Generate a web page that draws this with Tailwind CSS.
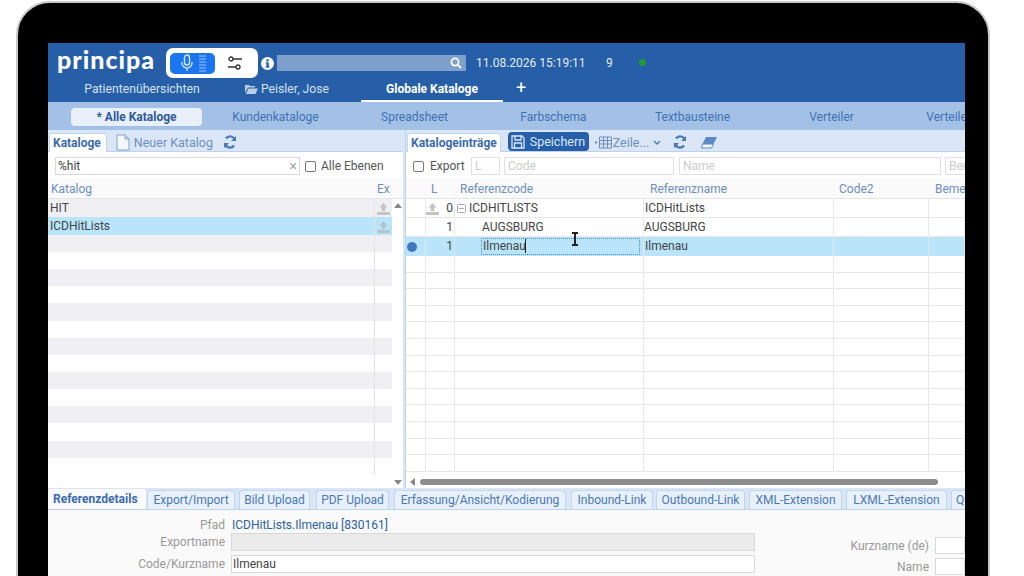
<!DOCTYPE html>
<html lang="en">
<head>
  <meta charset="UTF-8" />
  <title>principa - Globale Kataloge</title>
  <script src="https://cdn.jsdelivr.net/npm/@tailwindcss/browser@4"></script>
</head>
<body class="bg-white h-[576px] overflow-hidden font-['Roboto',sans-serif] text-[12px] text-[#444]">
  <!-- device frame -->
  <div class="relative ml-[16px] mt-[1px] w-[974px] h-[600px] bg-black border-2 border-[#c8c8c8] rounded-t-[34px] pt-[40px] pl-[30px]">
    <div class="w-[917px] h-[540px] bg-white overflow-hidden">

      <!-- header -->
      <div class="bg-[#265fa8] h-[59px] border-b border-[#265fa8]">
        <div class="flex items-center h-[35px] text-white">
          <span class="ml-[9px] w-[109px] font-['Lato',sans-serif] font-black text-[25px] leading-none tracking-[1px] -mt-[3px]">principa</span>
          <div class="flex items-center w-[92px] h-[30px] mt-[5px] bg-white rounded-[7px] pl-[4px]">
            <div class="flex items-center justify-center gap-[5px] w-[45px] h-[21px] bg-[#1a76ee] rounded-[5px]">
              <svg width="14" height="18" viewBox="0 0 14 18" fill="none" stroke="#cfe2fb" stroke-width="1.4"><rect x="4.5" y="1" width="5" height="10" rx="2.5"/><path d="M2 8v1a5 5 0 0 0 10 0V8M7 14v3"/></svg>
              <svg width="7" height="17" viewBox="0 0 7 17" fill="#5c9cf3"><rect y="0" width="7" height="2"/><rect y="3" width="7" height="2"/><rect y="6" width="7" height="2"/><rect y="9" width="7" height="2"/><rect y="12" width="7" height="2"/><rect y="15" width="7" height="2"/></svg>
            </div>
            <svg class="ml-[12px]" width="16" height="16" viewBox="0 0 16 16" fill="none" stroke="#333" stroke-width="1.3"><circle cx="4" cy="4" r="2"/><path d="M6 4h9M1 12h8"/><circle cx="11" cy="12" r="2"/></svg>
          </div>
          <svg class="ml-[3px] mt-[5px]" width="13" height="13" viewBox="0 0 13 13"><circle cx="6.5" cy="6.5" r="6.5" fill="#fff"/><rect x="5.4" y="5.4" width="2.4" height="4.8" fill="#265fa8"/><rect x="4.6" y="9.4" width="4" height="1.2" fill="#265fa8"/><rect x="4.6" y="5.2" width="2" height="1" fill="#265fa8"/><circle cx="6.5" cy="3.3" r="1.2" fill="#265fa8"/></svg>
          <div class="flex items-center justify-end ml-[3px] mt-[5px] w-[189px] h-[16px] bg-[#7d9fcb] pr-[4px]">
            <svg width="12" height="12" viewBox="0 0 12 12" fill="none" stroke="#fff" stroke-width="1.8"><circle cx="5" cy="5" r="3.6"/><path d="M8 8l3 3"/></svg>
          </div>
          <span class="ml-[10px] mt-[4px] w-[130px] text-[12px] text-[#e3ecf7]">11.08.2026 15:19:11</span>
          <span class="mt-[4px] w-[33px] text-[#e3ecf7]">9</span>
          <span class="mt-[3px] w-[7px] h-[7px] rounded-full bg-[#1e9a35]"></span>
        </div>
        <div class="flex h-[24px] items-start">
          <div class="w-[188px] pt-[2px] text-center text-[12.2px] text-[#d3e0f1]">Patientenübersichten</div>
          <div class="w-[125px] pt-[2px] flex items-center gap-[3px] pl-[9px] text-[12.2px] text-[#d3e0f1]">
            <svg width="13" height="10" viewBox="0 0 13 10" fill="#b9cde6"><path d="M0 1h4l1 1h5v1.5H3L0 9zM3.500 4.500H13L10.500 10H0.800z"/></svg>
            Peisler, Jose
          </div>
          <div class="w-[142px] h-[24px] pt-[2px] text-center text-white font-bold border-b-2 border-white">Globale Kataloge</div>
          <div class="ml-[13px] text-white text-[18px] leading-[19px]">+</div>
        </div>
      </div>

      <!-- catalogue nav -->
      <div class="flex items-center h-[28px] pt-[1px] pl-[19px] bg-[#a3c1e6] text-[#3f70b3] whitespace-nowrap overflow-hidden">
        <div class="shrink-0 w-[139px] flex justify-center"><span class="w-[131px] h-[18px] leading-[18px] text-center rounded-[4px] bg-[#e9f0f9] font-bold text-[#2d5a98]">* Alle Kataloge</span></div>
        <div class="shrink-0 w-[139px] text-center">Kundenkataloge</div>
        <div class="shrink-0 w-[139px] text-center">Spreadsheet</div>
        <div class="shrink-0 w-[139px] text-center">Farbschema</div>
        <div class="shrink-0 w-[139px] text-center">Textbausteine</div>
        <div class="shrink-0 w-[139px] text-center">Verteiler</div>
        <div class="shrink-0 w-[139px] text-center">Verteilergruppen</div>
      </div>

      <!-- panels -->
      <div class="flex h-[358px] bg-[#dae6f5]">
        <!-- left panel -->
        <div class="flex flex-col w-[355px] h-full">
          <div class="flex items-end h-[22px] border-b border-[#bcd3ee]">
            <div class="ml-[1px] pl-[3px] pr-[5px] h-[19px] leading-[19px] bg-white rounded-t-[3px] border border-b-0 border-[#c3d6ee] font-bold text-[#3a6cb0] -mb-px">Kataloge</div>
            <svg class="ml-[9px]" width="14" height="17" viewBox="0 0 14 17" fill="#f4f8fd" stroke="#7fa3d2"><path d="M1 1h8l4 4v11H1zM9 1v4h4"/></svg>
            <span class="ml-[4px] h-[19px] leading-[21px] text-[12.5px] text-[#6d8fc0]">Neuer Katalog</span>
            <svg class="ml-[10px] mb-[2px]" width="14" height="14" viewBox="0 0 14 14" fill="none" stroke="#4a79b8" stroke-width="2.200"><path d="M12 5.500A5 5 0 0 0 3 3.500M2 8.500A5 5 0 0 0 11 10.500"/><path d="M13 1v5H8zM1 13V8h5z" fill="#4a79b8" stroke="none"/></svg>
          </div>
          <div class="flex-1 bg-white min-h-0">
            <div class="flex items-center h-[26px] pt-[2px] pl-[7px]">
              <div class="flex items-center justify-between w-[245px] h-[18px] border border-[#d8d8d8] pl-[2px] pr-[2px]"><span class="text-[#444]">%hit</span><span class="text-[#aaa] text-[14px] leading-none">×</span></div>
              <span class="ml-[5px] w-[11px] h-[11px] rounded-[2px] border border-[#777] bg-white"></span>
              <span class="ml-[5px] text-[#555]">Alle Ebenen</span>
            </div>
            <div class="flex items-center h-[21px] pt-[1px] pl-[3px] bg-[#fafafa] border-b border-[#e4e4e4] text-[#6d8fc0]">
              <span class="w-[326px]">Katalog</span><span>Ex</span>
            </div>
            <div class="flex h-[288px]">
              <div class="w-[344px] flex flex-col">
                <div class="flex h-[18px] bg-[#f0f0f4] leading-[18px]"><span class="w-[326px] pl-[2px]">HIT</span><span class="flex-1 border-l border-[#e2e2e2] flex justify-center items-center"><svg width="13" height="13" viewBox="0 0 13 13" fill="#c4c4c4"><path d="M6.500 1l4 4.500H8.300V9H4.700V5.500H2.500zM0 10h13v3H0z"/></svg></span></div>
                <div class="flex h-[18px] bg-[#bae4f9] leading-[18px]"><span class="w-[326px] pl-[2px]">ICDHitLists</span><span class="flex-1 border-l border-[#e2e2e2] flex justify-center items-center"><svg width="13" height="13" viewBox="0 0 13 13" fill="#b4c4cc"><path d="M6.500 1l4 4.500H8.300V9H4.700V5.500H2.500zM0 10h13v3H0z"/></svg></span></div>
                <div class="flex h-[17px] bg-[#f0f0f4]"><span class="w-[326px]"></span><span class="flex-1 border-l border-[#e2e2e2]"></span></div>
                <div class="flex h-[17.15px]"><span class="w-[326px]"></span><span class="flex-1 border-l border-[#e2e2e2]"></span></div>
                <div class="flex h-[17.15px] bg-[#f0f0f4]"><span class="w-[326px]"></span><span class="flex-1 border-l border-[#e2e2e2]"></span></div>
                <div class="flex h-[17.15px]"><span class="w-[326px]"></span><span class="flex-1 border-l border-[#e2e2e2]"></span></div>
                <div class="flex h-[17.15px] bg-[#f0f0f4]"><span class="w-[326px]"></span><span class="flex-1 border-l border-[#e2e2e2]"></span></div>
                <div class="flex h-[17.15px]"><span class="w-[326px]"></span><span class="flex-1 border-l border-[#e2e2e2]"></span></div>
                <div class="flex h-[17.15px] bg-[#f0f0f4]"><span class="w-[326px]"></span><span class="flex-1 border-l border-[#e2e2e2]"></span></div>
                <div class="flex h-[17.15px]"><span class="w-[326px]"></span><span class="flex-1 border-l border-[#e2e2e2]"></span></div>
                <div class="flex h-[17.15px] bg-[#f0f0f4]"><span class="w-[326px]"></span><span class="flex-1 border-l border-[#e2e2e2]"></span></div>
                <div class="flex h-[17.15px]"><span class="w-[326px]"></span><span class="flex-1 border-l border-[#e2e2e2]"></span></div>
                <div class="flex h-[17.15px] bg-[#f0f0f4]"><span class="w-[326px]"></span><span class="flex-1 border-l border-[#e2e2e2]"></span></div>
                <div class="flex h-[17.15px]"><span class="w-[326px]"></span><span class="flex-1 border-l border-[#e2e2e2]"></span></div>
                <div class="flex h-[17.15px] bg-[#f0f0f4]"><span class="w-[326px]"></span><span class="flex-1 border-l border-[#e2e2e2]"></span></div>
                <div class="flex h-[17px]"><span class="w-[326px]"></span><span class="flex-1 border-l border-[#e2e2e2]"></span></div>
              </div>
              <div class="flex-1 flex flex-col justify-between items-center pt-[4px] pb-[2px]">
                <svg width="8" height="5" viewBox="0 0 8 5" fill="#888"><path d="M4 0l4 5H0z"/></svg>
                <svg width="8" height="5" viewBox="0 0 8 5" fill="#888"><path d="M4 5L0 0h8z"/></svg>
              </div>
            </div>
          </div>
        </div>

        <!-- right panel -->
        <div class="flex flex-col w-[560px] ml-[2px] h-full border-l border-[#bcd3ee]">
          <div class="flex items-end h-[22px] border-b border-[#bcd3ee] text-[#6d8fc0] whitespace-nowrap">
            <div class="ml-[1px] px-[3px] h-[19px] leading-[19px] bg-white rounded-t-[3px] border border-b-0 border-[#c3d6ee] font-bold text-[#3a6cb0] -mb-px">Katalogeinträge</div>
            <div class="ml-[7px] flex items-center gap-[5px] w-[81px] h-[19px] pl-[3px] rounded-[4px] bg-[#2760a9] text-[12.5px] leading-[20px] text-[#dbe7f6]">
              <svg width="14" height="14" viewBox="0 0 14 14" fill="none" stroke="#dbe7f6" stroke-width="1.300"><path d="M1 1h10l2 2v10H1z"/><path d="M4 1v4h6V1M3.500 13V8h7v5"/></svg>
              <span class="pt-[1px]">Speichern</span>
            </div>
            <svg class="ml-[6px] mb-[2px]" width="17" height="13" viewBox="0 0 17 13" fill="none" stroke="#6d8fc0"><path d="M4.500 1h12v11h-12zM4.500 4.500h12M4.500 8h12M8.500 1v11M12.500 1v11"/><path d="M0 5l3 1.500L0 8z" fill="#6d8fc0" stroke="none"/></svg>
            <span class="ml-[1px] h-[19px] leading-[21px] text-[12.5px]">Zeile...</span>
            <svg class="ml-[4px] mb-[5px]" width="8" height="6" viewBox="0 0 8 6" fill="none" stroke="#4a79b8" stroke-width="1.300"><path d="M1 1l3 3 3-3"/></svg>
            <svg class="ml-[12px] mb-[2px]" width="14" height="14" viewBox="0 0 14 14" fill="none" stroke="#4a79b8" stroke-width="2.200"><path d="M12 5.500A5 5 0 0 0 3 3.500M2 8.500A5 5 0 0 0 11 10.500"/><path d="M13 1v5H8zM1 13V8h5z" fill="#4a79b8" stroke="none"/></svg>
            <svg class="ml-[14px] mb-[2px]" width="17" height="13" viewBox="0 0 17 13"><path d="M5 1h11l-3.500 7H1.500z" fill="#5d8ac6"/><path d="M1.500 8h11l-2 4H.5z" fill="#f3f7fc" stroke="#5d8ac6"/></svg>
          </div>
          <div class="flex-1 bg-white min-h-0 overflow-hidden">
            <div class="flex items-center h-[26px] pt-[2px] pl-[7px] text-[#555] whitespace-nowrap">
              <span class="shrink-0 w-[11px] h-[11px] rounded-[2px] border border-[#777] bg-white"></span>
              <span class="shrink-0 ml-[6px] w-[41px]">Export</span>
              <span class="shrink-0 w-[29px] h-[18px] leading-[16px] pl-[3px] border border-[#e0e0e0] text-[#ccc]">L</span>
              <span class="shrink-0 ml-[4px] w-[170px] h-[18px] leading-[16px] pl-[3px] border border-[#e0e0e0] text-[#ccc]">Code</span>
              <span class="shrink-0 ml-[5px] w-[262px] h-[18px] leading-[16px] pl-[3px] border border-[#e0e0e0] text-[#ccc]">Name</span>
              <span class="shrink-0 ml-[4px] w-[60px] h-[18px] leading-[16px] pl-[3px] border border-[#e0e0e0] text-[#ccc]">Bemerkung</span>
            </div>
            <div class="grid grid-cols-[20px_29px_189px_190px_95px_1fr] h-[21px] pt-[1px] items-center bg-[#fafafa] border-b border-[#e4e4e4] text-[#6d8fc0] whitespace-nowrap">
              <span></span><span class="pl-[5px]">L</span><span class="pl-[5px]">Referenzcode</span><span class="pl-[6px]">Referenzname</span><span class="pl-[5px]">Code2</span><span class="pl-[6px] overflow-hidden">Bemerkung</span>
            </div>
            <div class="grid grid-cols-[20px_29px_189px_190px_95px_1fr] h-[19px] leading-[18px] border-b border-[#e8e8e8] *:border-r *:border-[#e8e8e8]">
              <span></span>
              <span class="flex items-center justify-between pr-[1px]"><svg width="13" height="13" viewBox="0 0 13 13" fill="#c4c4c4"><path d="M6.500 1l4 4.500H8.300V9H4.700V5.500H2.500zM0 10h13v3H0z"/></svg><span>0</span></span>
              <span class="flex items-center pl-[2px]"><svg width="9" height="9" viewBox="0 0 9 9" fill="none" stroke="#aaa"><rect x=".5" y=".5" width="8" height="8" rx="1"/><path d="M2 4.500h5"/></svg><span class="ml-[3px]">ICDHITLISTS</span></span>
              <span class="pl-[1px]">ICDHitLists</span><span></span><span></span>
            </div>
            <div class="grid grid-cols-[20px_29px_189px_190px_95px_1fr] h-[19px] leading-[18px] border-b border-[#e8e8e8] *:border-r *:border-[#e8e8e8]">
              <span></span><span class="text-right pr-[1px]">1</span><span class="pl-[27px]">AUGSBURG</span><span>AUGSBURG</span><span></span><span></span>
            </div>
            <div class="grid grid-cols-[20px_29px_189px_190px_95px_1fr] h-[19px] leading-[18px] bg-[#bae4f9] *:border-r *:border-[#dfe8ec]">
              <span class="flex items-center pl-[1px]"><span class="w-[10px] h-[10px] rounded-full bg-[#3f78bf]"></span></span>
              <span class="text-right pr-[1px]">1</span>
              <span class="pl-[26px] pr-[3px] py-[1px]"><span class="block h-[17px] leading-[15px] border border-dotted border-[#3f8fd6] pl-[1px]">Ilmenau<span class="border-l border-[#222] ml-[-1px]"></span></span></span>
              <span class="pl-[1px]">Ilmenau</span><span></span><span></span>
            </div>
            <div class="grid grid-cols-[20px_29px_189px_190px_95px_1fr] h-[16.6px] border-b border-[#e8e8e8] *:border-r *:border-[#e8e8e8]"><span></span><span></span><span></span><span></span><span></span><span></span></div>
            <div class="grid grid-cols-[20px_29px_189px_190px_95px_1fr] h-[16.6px] border-b border-[#e8e8e8] *:border-r *:border-[#e8e8e8]"><span></span><span></span><span></span><span></span><span></span><span></span></div>
            <div class="grid grid-cols-[20px_29px_189px_190px_95px_1fr] h-[16.6px] border-b border-[#e8e8e8] *:border-r *:border-[#e8e8e8]"><span></span><span></span><span></span><span></span><span></span><span></span></div>
            <div class="grid grid-cols-[20px_29px_189px_190px_95px_1fr] h-[16.6px] border-b border-[#e8e8e8] *:border-r *:border-[#e8e8e8]"><span></span><span></span><span></span><span></span><span></span><span></span></div>
            <div class="grid grid-cols-[20px_29px_189px_190px_95px_1fr] h-[16.6px] border-b border-[#e8e8e8] *:border-r *:border-[#e8e8e8]"><span></span><span></span><span></span><span></span><span></span><span></span></div>
            <div class="grid grid-cols-[20px_29px_189px_190px_95px_1fr] h-[16.6px] border-b border-[#e8e8e8] *:border-r *:border-[#e8e8e8]"><span></span><span></span><span></span><span></span><span></span><span></span></div>
            <div class="grid grid-cols-[20px_29px_189px_190px_95px_1fr] h-[16.6px] border-b border-[#e8e8e8] *:border-r *:border-[#e8e8e8]"><span></span><span></span><span></span><span></span><span></span><span></span></div>
            <div class="grid grid-cols-[20px_29px_189px_190px_95px_1fr] h-[16.6px] border-b border-[#e8e8e8] *:border-r *:border-[#e8e8e8]"><span></span><span></span><span></span><span></span><span></span><span></span></div>
            <div class="grid grid-cols-[20px_29px_189px_190px_95px_1fr] h-[16.6px] border-b border-[#e8e8e8] *:border-r *:border-[#e8e8e8]"><span></span><span></span><span></span><span></span><span></span><span></span></div>
            <div class="grid grid-cols-[20px_29px_189px_190px_95px_1fr] h-[16.6px] border-b border-[#e8e8e8] *:border-r *:border-[#e8e8e8]"><span></span><span></span><span></span><span></span><span></span><span></span></div>
            <div class="grid grid-cols-[20px_29px_189px_190px_95px_1fr] h-[16.6px] border-b border-[#e8e8e8] *:border-r *:border-[#e8e8e8]"><span></span><span></span><span></span><span></span><span></span><span></span></div>
            <div class="grid grid-cols-[20px_29px_189px_190px_95px_1fr] h-[16.6px] border-b border-[#e8e8e8] *:border-r *:border-[#e8e8e8]"><span></span><span></span><span></span><span></span><span></span><span></span></div>
            <div class="grid grid-cols-[20px_29px_189px_190px_95px_1fr] h-[16.6px] border-b border-[#e8e8e8] *:border-r *:border-[#e8e8e8]"><span></span><span></span><span></span><span></span><span></span><span></span></div>
            <div class="flex items-center h-[16px] pl-[4px] pt-[4px]">
              <svg width="5" height="8" viewBox="0 0 5 8" fill="#888"><path d="M0 4l5-4v8z"/></svg>
              <div class="ml-[5px] w-[518px] h-[6px] rounded-full bg-[#8c8c8c]"></div>
            </div>
          </div>
        </div>
      </div>

      <!-- detail tabs -->
      <div class="flex items-end h-[22px] bg-[#dae6f5] border-b border-[#bcd3ee] text-[#4a79b8] whitespace-nowrap overflow-hidden">
        <div class="shrink-0 w-[98px] h-[21px] leading-[20px] pl-[5px] bg-[#fafafa] rounded-t-[3px] font-bold text-[#3a6cb0] -mb-px">Referenzdetails</div>
        <div class="shrink-0 ml-[1px] w-[88px] h-[19px] leading-[19px] text-center bg-[#e8f0fa] border border-b-0 border-[#c3d6ee] rounded-t-[3px]">Export/Import</div>
        <div class="shrink-0 ml-[4px] w-[71px] h-[19px] leading-[19px] text-center bg-[#e8f0fa] border border-b-0 border-[#c3d6ee] rounded-t-[3px]">Bild Upload</div>
        <div class="shrink-0 ml-[6px] w-[73px] h-[19px] leading-[19px] text-center bg-[#e8f0fa] border border-b-0 border-[#c3d6ee] rounded-t-[3px]">PDF Upload</div>
        <div class="shrink-0 ml-[5px] w-[172px] h-[19px] leading-[19px] text-center bg-[#e8f0fa] border border-b-0 border-[#c3d6ee] rounded-t-[3px]">Erfassung/Ansicht/Kodierung</div>
        <div class="shrink-0 ml-[5px] w-[82px] h-[19px] leading-[19px] text-center bg-[#e8f0fa] border border-b-0 border-[#c3d6ee] rounded-t-[3px]">Inbound-Link</div>
        <div class="shrink-0 ml-[3px] w-[89px] h-[19px] leading-[19px] text-center bg-[#e8f0fa] border border-b-0 border-[#c3d6ee] rounded-t-[3px]">Outbound-Link</div>
        <div class="shrink-0 ml-[4px] w-[93px] h-[19px] leading-[19px] text-center bg-[#e8f0fa] border border-b-0 border-[#c3d6ee] rounded-t-[3px]">XML-Extension</div>
        <div class="shrink-0 ml-[4px] w-[101px] h-[19px] leading-[19px] text-center bg-[#e8f0fa] border border-b-0 border-[#c3d6ee] rounded-t-[3px]">LXML-Extension</div>
        <div class="shrink-0 ml-[4px] w-[60px] h-[19px] leading-[19px] pl-[4px] bg-[#e8f0fa] border border-b-0 border-[#c3d6ee] rounded-t-[3px]">Qualität</div>
      </div>

      <!-- details form -->
      <div class="flex h-[70px] bg-[#fafafa] text-[#999] overflow-hidden">
        <div class="w-[707px] pt-[5px]">
          <div class="flex items-center h-[18px] pt-[1px]"><span class="w-[177px] text-right">Pfad</span><span class="ml-[7px] text-[#2a60a8]">ICDHitLists.Ilmenau [830161]</span></div>
          <div class="flex items-center h-[18px]"><span class="w-[177px] text-right">Exportname</span><span class="ml-[6px] w-[524px] h-[18px] bg-[#ebebeb] border border-[#d8d8d8]"></span></div>
          <div class="flex items-center h-[18px] mt-[4px]"><span class="w-[177px] text-right">Code/Kurzname</span><span class="ml-[6px] w-[524px] h-[18px] leading-[16px] pl-[1px] bg-white border border-[#d8d8d8] text-[#444]">Ilmenau</span></div>
        </div>
        <div class="flex-1 pt-[25px] whitespace-nowrap">
          <div class="flex items-center h-[21px]"><span class="w-[174px] text-right">Kurzname (de)</span><span class="ml-[6px] flex-1 h-[17px] bg-white border border-[#d8d8d8]"></span></div>
          <div class="flex items-center h-[21px]"><span class="w-[174px] text-right">Name</span><span class="ml-[6px] flex-1 h-[17px] bg-white border border-[#d8d8d8]"></span></div>
        </div>
      </div>
    </div>

    <!-- text cursor over the table -->
    <svg class="absolute left-[552px] top-[229px]" width="10" height="14" viewBox="0 0 10 14" fill="none" stroke="#222" stroke-width="2"><path d="M2 1h6M2 13h6M5 1v12"/></svg>
  </div>
</body>
</html>
